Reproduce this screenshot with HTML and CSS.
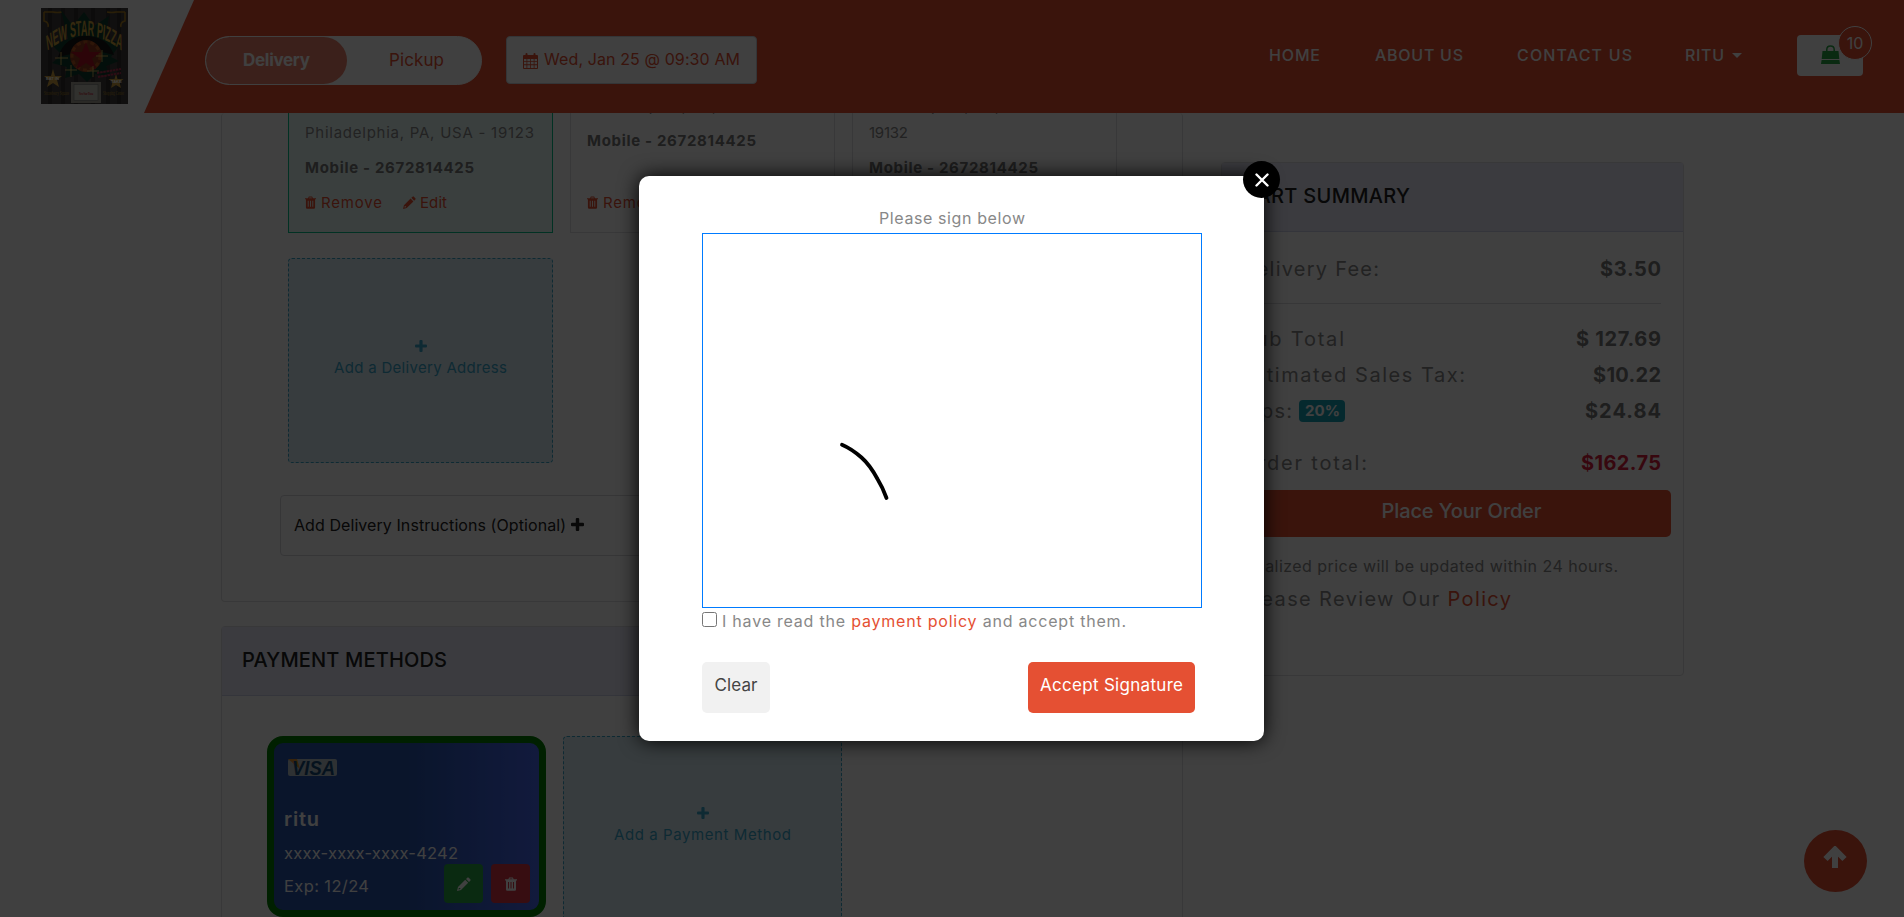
FILE: index.html
```html
<!DOCTYPE html>
<html lang="en">
<head>
<meta charset="utf-8">
<title>New Star Pizza - Checkout</title>
<link rel="stylesheet" href="styles.css">
</head>
<body>
<svg class="defs" width="0" height="0">
  <symbol id="trash" viewBox="0 0 12 14"><path fill-rule="evenodd" d="M4.2.5h3.6l.9 1.8H12v1.2h-1V12.400q0 1.400-1.300 1.400H2.300Q1 13.800 1 12.400V3.500H0V2.300h3.300zM4.800 1.500l-.4.800h3.200l-.4-.8zM3 5v6.500h1V5zm2.500 0v6.500h1V5zM8 5v6.500h1V5z"/></symbol>
  <symbol id="pencil" viewBox="0 0 14 14"><path fill-rule="evenodd" d="M10.300.700q.7-.7 1.400 0l1.600 1.600q.7.700 0 1.400L12 5 9 2zM8.200 2.800l3 3L4 13l-4 1 1-4zM1.900 10.700l-.4 1.800 1.800-.4v-1H1.900z"/></symbol>
  <symbol id="plus" viewBox="0 0 12 12"><path d="M4.400 1q0-1 1-1h1.200q1 0 1 1v3.400H11q1 0 1 1v1.200q0 1-1 1H7.600V11q0 1-1 1H5.400q-1 0-1-1V7.600H1q-1 0-1-1V5.400q0-1 1-1h3.400z"/></symbol>
</svg>

<header class="header">
  <div class="brand">
    <svg class="logo" viewBox="0 0 87 96">
      <rect width="87" height="96" fill="#403e3c"/>
      <path d="M9 0v96M22 0v96M35 0v96M52 0v96M67 0v96M78 0v96" stroke="#2c2a28" stroke-width="4" opacity=".7"/>
      <path d="M3 4h9q4 1 9 0M3 4v9q5 1 4 6M84 4h-9q-4 1-9 0M84 4v9q-5 1-4 6" fill="none" stroke="#a87c20" stroke-width="1.500"/>
      <path d="M20 2l12 16L43 4l10 14L68 8l-4 22 16 5-10 14 8 4-13 5 4 10-15-2-8 8-8-8-14 4 2-11-15-4 10-8-10-10 16-6z" fill="#0d3f2c"/>
      <path d="M17 49Q24 28 45 28t28 19l-12-3Q55 33 45 33T30 46z" fill="#141414"/>
      <circle cx="45" cy="48" r="16" fill="#8e3a1c"/>
      <circle cx="45" cy="48" r="14" fill="none" stroke="#b85a22" stroke-width="3" stroke-dasharray="4 3"/>
      <path d="M45 34l3.500 10h11l-8.500 6.500 4 11L45 55l-10 6.500 4-11-9-6.500h11z" fill="#b01026"/>
      <g transform="scale(1 2.4)">
        <path id="arc" d="M6 18Q44 5 81 18" fill="none"/>
        <text class="logo-name"><textPath href="#arc" startOffset="50%" text-anchor="middle">NEW STAR PIZZA</textPath></text>
      </g>
      <path d="M20 44v13M14 50h13M30 57v12M24 62h12M61 42v12M55 48h12M52 58v11M46 63h12" stroke="#e0ba5a" stroke-width=".9"/>
      <path d="M12 61l2 7h7l-5 4 2 7-6-4-6 4 2-7-5-4h7z" fill="#cfa040"/>
      <path d="M75 66l1.500 5h6l-4 3 1.500 6-5-3-5 3 1.500-6-4-3h6z" fill="#cfa040"/>
      <text x="5" y="72" class="logo-tag">EAT IN</text><text x="70" y="75" class="logo-tag">TAKE</text>
      <path d="M56 65l24-4M57 69l23-4" stroke="#b03050" stroke-width="2" stroke-dasharray="2.500 .7"/>
      <text x="3" y="87" class="logo-foot" textLength="25" lengthAdjust="spacingAndGlyphs">Strawberry Square</text>
      <text x="62" y="87" class="logo-foot" textLength="21" lengthAdjust="spacingAndGlyphs">Shopping Center</text>
      <rect x="30" y="74" width="30" height="21" fill="#a8a498"/><rect x="33" y="76.500" width="24" height="16" fill="#c4c1b8" stroke="#777" stroke-width=".6"/>
      <text x="45" y="86.500" text-anchor="middle" class="logo-card" textLength="14" lengthAdjust="spacingAndGlyphs">New Star Pizza</text>
    </svg>
  </div>
  <div class="bar">
    <div class="toggle"><div class="toggle-on"><span data-w="66">Delivery</span></div><div class="toggle-off"><span data-w="54">Pickup</span></div></div>
    <div class="date">
      <svg width="15" height="16" viewBox="0 0 15 16"><path fill-rule="evenodd" d="M1 2h1.500V1q0-1 1-1t1 1v1h6V1q0-1 1-1t1 1v1H14q1 0 1 1v12q0 1-1 1H1q-1 0-1-1V3q0-1 1-1zM1 6v2.200h2.500V6zm3.300 0v2.200h2.800V6zm3.600 0v2.200h2.800V6zm3.600 0v2.200H14V6zM1 9v2.300h2.500V9zm3.300 0v2.300h2.800V9zm3.600 0v2.300h2.800V9zm3.600 0v2.300H14V9zM1 12.200V15h2.500v-2.800zm3.300 0V15h2.800v-2.800zm3.600 0V15h2.800v-2.800zm3.600 0V15H14v-2.800z"/></svg>
      <span class="t-date" data-w="195">Wed, Jan 25 @ 09:30 AM</span>
    </div>
    <nav class="nav">
      <a><span data-w="50">HOME</span></a><a><span data-w="87">ABOUT US</span></a><a><span data-w="114">CONTACT US</span></a><a><span data-w="38">RITU</span></a><i class="caret"></i>
    </nav>
    <div class="basket">
      <svg width="19" height="19" viewBox="0 0 19 19"><path d="M1.500 6h16l.8 8H.7zM.6 15h17.800l.6 4H0z"/><path d="M5.800 8V4.500Q5.800 1 9.500 1t3.700 3.500V8" fill="none" stroke="#28a745" stroke-width="1.500"/></svg>
      <span class="count">10</span>
    </div>
  </div>
</header>

<main class="page">
  <div class="left">
    <section class="panel delivery">
      <div class="addresses">
        <article class="addr selected"><p class="first" data-w="228">Philadelphia, PA, USA - 19123</p><p class="mob" data-w="168">Mobile - 2672814425</p>
          <p class="acts"><svg class="i-trash"><use href="#trash"/></svg><span data-w="60">Remove</span><svg class="i-pencil"><use href="#pencil"/></svg><span data-w="26">Edit</span></p></article>
        <article class="addr"><p data-w="228">Philadelphia, PA, USA - 19132</p><p class="mob" data-w="168">Mobile - 2672814425</p>
          <p class="acts"><svg class="i-trash"><use href="#trash"/></svg><span data-w="60">Remove</span></p></article>
        <article class="addr"><p>Philadelphia, PA, USA -</p><p data-w="38">19132</p><p class="mob" data-w="168">Mobile - 2672814425</p></article>
      </div>
      <div class="add add-addr"><svg><use href="#plus"/></svg><span data-w="172">Add a Delivery Address</span></div>
      <div class="instructions"><span data-w="271">Add Delivery Instructions (Optional)</span><svg><use href="#plus"/></svg></div>
    </section>
    <section class="panel payment">
      <h2 class="panel-head"><span data-w="204">PAYMENT METHODS</span></h2>
      <div class="methods">
        <article class="card">
          <svg class="visa" viewBox="0 0 49 17"><rect width="49" height="17" rx="2" fill="#b8c4cc"/><path d="M0 0h9l3 10z" fill="#e09030"/><text x="4" y="16" textLength="43" lengthAdjust="spacingAndGlyphs">VISA</text></svg>
          <p class="holder"><span data-w="34">ritu</span></p>
          <p class="num"><span data-w="173">xxxx-xxxx-xxxx-4242</span></p>
          <p class="exp"><span data-w="84">Exp: 12/24</span></p>
          <div class="card-acts"><span class="b-edit"><svg><use href="#pencil"/></svg></span><span class="b-del"><svg><use href="#trash"/></svg></span></div>
        </article>
        <div class="add add-pay"><svg><use href="#plus"/></svg><span data-w="176">Add a Payment Method</span></div>
      </div>
    </section>
  </div>
  <aside class="panel cart">
    <h2 class="panel-head"><span data-w="167">CART SUMMARY</span></h2>
    <div class="row r-fee"><span data-w="137">Delivery Fee:</span><b data-w="60">$3.50</b></div>
    <hr>
    <div class="row"><span data-w="102">Sub Total</span><b data-w="84">$ 127.69</b></div>
    <div class="row"><span data-w="223">Estimated Sales Tax:</span><b data-w="67">$10.22</b></div>
    <div class="row"><span class="tips"><span data-w="50">Tips:</span><em><span data-w="34">20%</span></em></span><b data-w="75">$24.84</b></div>
    <div class="row r-total"><span data-w="125">Order total:</span><b class="total" data-w="79">$162.75</b></div>
    <div class="place"><span data-w="159">Place Your Order</span></div>
    <p class="note"><span data-w="376">Finalized price will be updated within 24 hours.</span></p>
    <p class="review"><span data-w="269">Please Review Our <a>Policy</a></span></p>
  </aside>
</main>

<div class="to-top"><svg width="26" height="24" viewBox="0 0 26 24"><path d="M13 3v19M3.500 13L13 3.500 22.500 13" fill="none" stroke="#fff" stroke-width="6"/></svg></div>
<div class="backdrop"></div>
<div class="modal">
  <span class="close"><svg width="14" height="14" viewBox="0 0 14 14"><path d="M1.500 1.500l11 11M12.500 1.500l-11 11" stroke="#fff" stroke-width="2.400" stroke-linecap="round"/></svg></span>
  <p class="prompt"><span data-w="145">Please sign below</span></p>
  <div class="pad"><svg width="498" height="373" viewBox="703 234 498 373"><path d="M842 444.700Q852 449 861.500 457.500Q870 465 877.500 479Q883 488 886.500 498" fill="none" stroke="#000" stroke-width="3.800" stroke-linecap="round"/></svg></div>
  <div class="agree"><span class="box"></span><span data-w="403">I have read the <a>payment policy</a> and accept them.</span></div>
  <div class="buttons"><span class="clear"><span data-w="42">Clear</span></span><span class="accept"><span data-w="142">Accept Signature</span></span></div>
</div>
<script src="spacing.js"></script>
</body>
</html>
```
FILE: spacing.js
```js
// Tracks each label out to its design width, given in px in data-w.
document.querySelectorAll('[data-w]').forEach((el) => {
  const gaps = el.textContent.length - 1;
  el.style.display = 'inline-block';
  el.style.letterSpacing = '0px';
  const spacing = (Number(el.dataset.w) + 1 - el.getBoundingClientRect().width) / gaps;
  el.style.letterSpacing = spacing + 'px';
  el.style.marginRight = -spacing + 'px';
});
```
FILE: styles.css
```css
* { box-sizing: border-box; }
body { margin: 0; height: 917px; overflow: hidden; background: #fff; color: #888; font-family: Inter, "Liberation Sans", sans-serif; font-size: 16px; white-space: nowrap; }
p, h2 { margin: 0; }
a { color: #e55033; }
.defs { position: absolute; }

.header { height: 113px; display: flex; }
.brand { width: 144px; padding: 8px 0 0 41px; flex: none; }
.logo { width: 87px; height: 96px; display: block; }
.logo-name { font: 700 9px "Liberation Sans", sans-serif; fill: #d0a23c; }
.logo-tag { font: 700 4px "Liberation Sans", sans-serif; fill: #fff; }
.logo-foot { font: 7px "Liberation Serif", serif; fill: #b08428; }
.logo-card { font: 700 3.5px "Liberation Serif", serif; fill: #c01020; }
.bar { flex: 1; display: flex; align-items: flex-start; background: #e55033; clip-path: polygon(50px 0, 100% 0, 100% 100%, 0 100%); padding-left: 61px; }
.toggle { width: 277px; height: 49px; margin-top: 36px; border: 1px solid #fff; border-radius: 25px; background: #fff; display: flex; line-height: 47px; font-size: 17px; overflow: hidden; }
.toggle-on { width: 141px; background: #e9806b; color: #fff; font-weight: 700; border-radius: 24px; padding-left: 37px; }
.toggle-off { color: #e55033; padding-left: 42px; }
.date { width: 251px; height: 48px; margin: 36px 0 0 24px; border: 1px solid #ced4da; border-radius: 4px; background: #fff; color: #e55033; fill: #e55033; display: flex; align-items: center; gap: 6px; padding-left: 16px; }
.date svg { margin-top: 2px; }
.t-date { padding-bottom: 2px; }
.nav { margin: 43px 0 0 512px; width: 528px; display: grid; grid-template-columns: 106px 142px 168px 47px 10px; line-height: 24px; font-weight: 500; }
.nav a { color: #fff; }
.caret { width: 0; height: 5px; margin-top: 10px; border: 5px solid transparent; border-top-color: #fff; border-bottom: 0; }
.basket { position: relative; width: 66px; height: 41px; margin-top: 35px; border-radius: 4px; background: #fff; fill: #28a745; padding: 10px 0 0 24px; }
.count { position: absolute; left: 41px; top: -9px; width: 34px; height: 34px; line-height: 32px; text-align: center; border: 1px solid #fff; border-radius: 50%; background: #e55033; color: #fff; }

.page { height: 804px; overflow: hidden; display: flex; align-items: flex-start; padding-left: 221px; }
.left { width: 962px; }
.panel { border: 1px solid #dfdfe2; border-radius: 4px; }
.delivery { height: 489px; border-top: 0; padding: 0 58px; display: flow-root; }
.addresses { display: grid; grid-template-columns: repeat(3, 265px); gap: 17px; height: 141px; margin: -21px 0 25px 8px; font-size: 15px; line-height: 27px; letter-spacing: .8px; }
.addr { border: 1px solid #dfdfe2; border-top: 0; padding: 0 16px 16px; display: flex; flex-direction: column; align-items: flex-start; }
.selected { background: #e8fcf8; border-color: #06c48d; }
.first { margin-top: 27px; }
.mob { font-weight: 700; color: #777; margin-top: 8px; }
.acts { margin-top: auto; display: flex; align-items: center; color: #e55033; fill: #e55033; letter-spacing: 0; }
.i-trash { width: 11px; height: 13px; margin-right: 5px; }
.i-pencil { width: 13px; height: 13px; margin: 0 4px 0 21px; }
.add { background: #dceef8; border: 1px dashed #3ba8cc; border-radius: 4px; color: #3ba8cc; fill: #3ba8cc; display: flex; flex-direction: column; align-items: center; font-size: 15px; }
.add svg { width: 12px; height: 12px; }
.add span { line-height: 27px; margin-top: 2px; }
.add-addr { width: 265px; height: 205px; margin-left: 8px; padding-top: 81px; }
.instructions { width: 845px; height: 61px; margin-top: 32px; border: 1px solid #d8d8dc; border-radius: 4px; color: #222; fill: #222; display: flex; align-items: center; gap: 5px; padding: 0 13px 2px; }
.instructions svg { width: 13px; height: 13px; }
.payment { margin-top: 24px; height: 320px; }
.panel-head { height: 69px; background: #e9ecfa; border-bottom: 1px solid #d0d3ea; color: #222; font-size: 20px; font-weight: 500; line-height: 67px; padding-left: 20px; }
.methods { display: flex; gap: 17px; padding: 40px 0 0 45px; }
.card { position: relative; width: 279px; height: 181px; border: 7px solid #008000; border-radius: 16px; background: linear-gradient(90deg, #2854ac 50%, #4868f0); color: #fff; padding: 16px 10px 0; }
.visa { width: 49px; height: 17px; display: block; margin-left: 4px; }
.visa text { font: italic 700 20px "Liberation Sans", sans-serif; fill: #164a78; }
.holder { font-size: 20px; font-weight: 600; line-height: 30px; margin-top: 28px; }
.num { font-size: 16.5px; line-height: 24px; margin-top: 7px; }
.exp { font-size: 16.5px; line-height: 24px; margin-top: 9px; }
.card-acts { position: absolute; left: 170px; top: 121px; display: flex; gap: 8px; fill: #fff; }
.card-acts span { width: 39px; height: 39px; border-radius: 4px; display: grid; place-items: center; background: #28a745; }
.card-acts .b-del { background: #dc3545; }
.card-acts svg { width: 14px; height: 14px; }
.add-pay { width: 279px; height: 190px; padding-top: 70px; }

.cart { width: 463px; height: 514px; margin: 49px 0 0 38px; }
.row { display: flex; justify-content: space-between; height: 36px; line-height: 36px; padding: 0 22px 0 19px; font-size: 20px; }
.row b { color: #777; }
.row .total { color: #dc1e3c; }
.r-fee { margin-top: 19px; }
.cart hr { height: 1px; border: 0; background: #dadade; margin: 16px 22px 17px 19px; }
.tips { display: flex; align-items: center; }
.tips em { margin-left: 7px; width: 46px; height: 22px; border-radius: 4px; background: #17a2b8; color: #fff; font: 700 15px/22px Inter, sans-serif; padding-left: 6px; }
.r-total { margin-top: 16px; }
.place { margin: 9px 12px 0 30px; height: 47px; border-radius: 5px; background: #e55033; color: #fff; text-align: center; font-size: 20px; line-height: 43px; font-weight: 500; }
.note { margin-top: 17px; line-height: 24px; padding-left: 19px; }
.review { font-size: 20px; line-height: 30px; margin-top: 6px; padding-left: 19px; }

.to-top { position: absolute; left: 1804px; top: 830px; width: 63px; height: 62px; border-radius: 50%; background: #e55033; padding: 16px 0 0 18px; }
.backdrop { position: absolute; inset: 0; background: rgba(0, 0, 0, .75); }
.modal { position: absolute; left: 639px; top: 176px; width: 625px; height: 565px; border-radius: 10px; background: #fff; box-shadow: 0 0 20px #000; padding: 30px 62px 0 63px; }
.close { position: absolute; left: 604px; top: -15px; width: 37px; height: 37px; border-radius: 50%; background: #000; display: grid; place-items: center; }
.prompt { text-align: center; line-height: 24px; height: 27px; }
.pad { width: 500px; height: 375px; border: 1px solid #007bff; }
.agree { display: flex; height: 54px; line-height: 27px; }
.box { width: 15px; height: 15px; border: 1px solid #767676; border-radius: 2.500px; margin: 4px 5px 0 0; }
.buttons { display: flex; justify-content: space-between; margin-right: 7px; font-size: 17px; line-height: 47px; }
.clear, .accept { height: 51px; border-radius: 5px; text-align: center; }
.clear { width: 68px; background: #f1f1f1; color: #444; }
.accept { width: 167px; background: #e55033; color: #fff; }
```
